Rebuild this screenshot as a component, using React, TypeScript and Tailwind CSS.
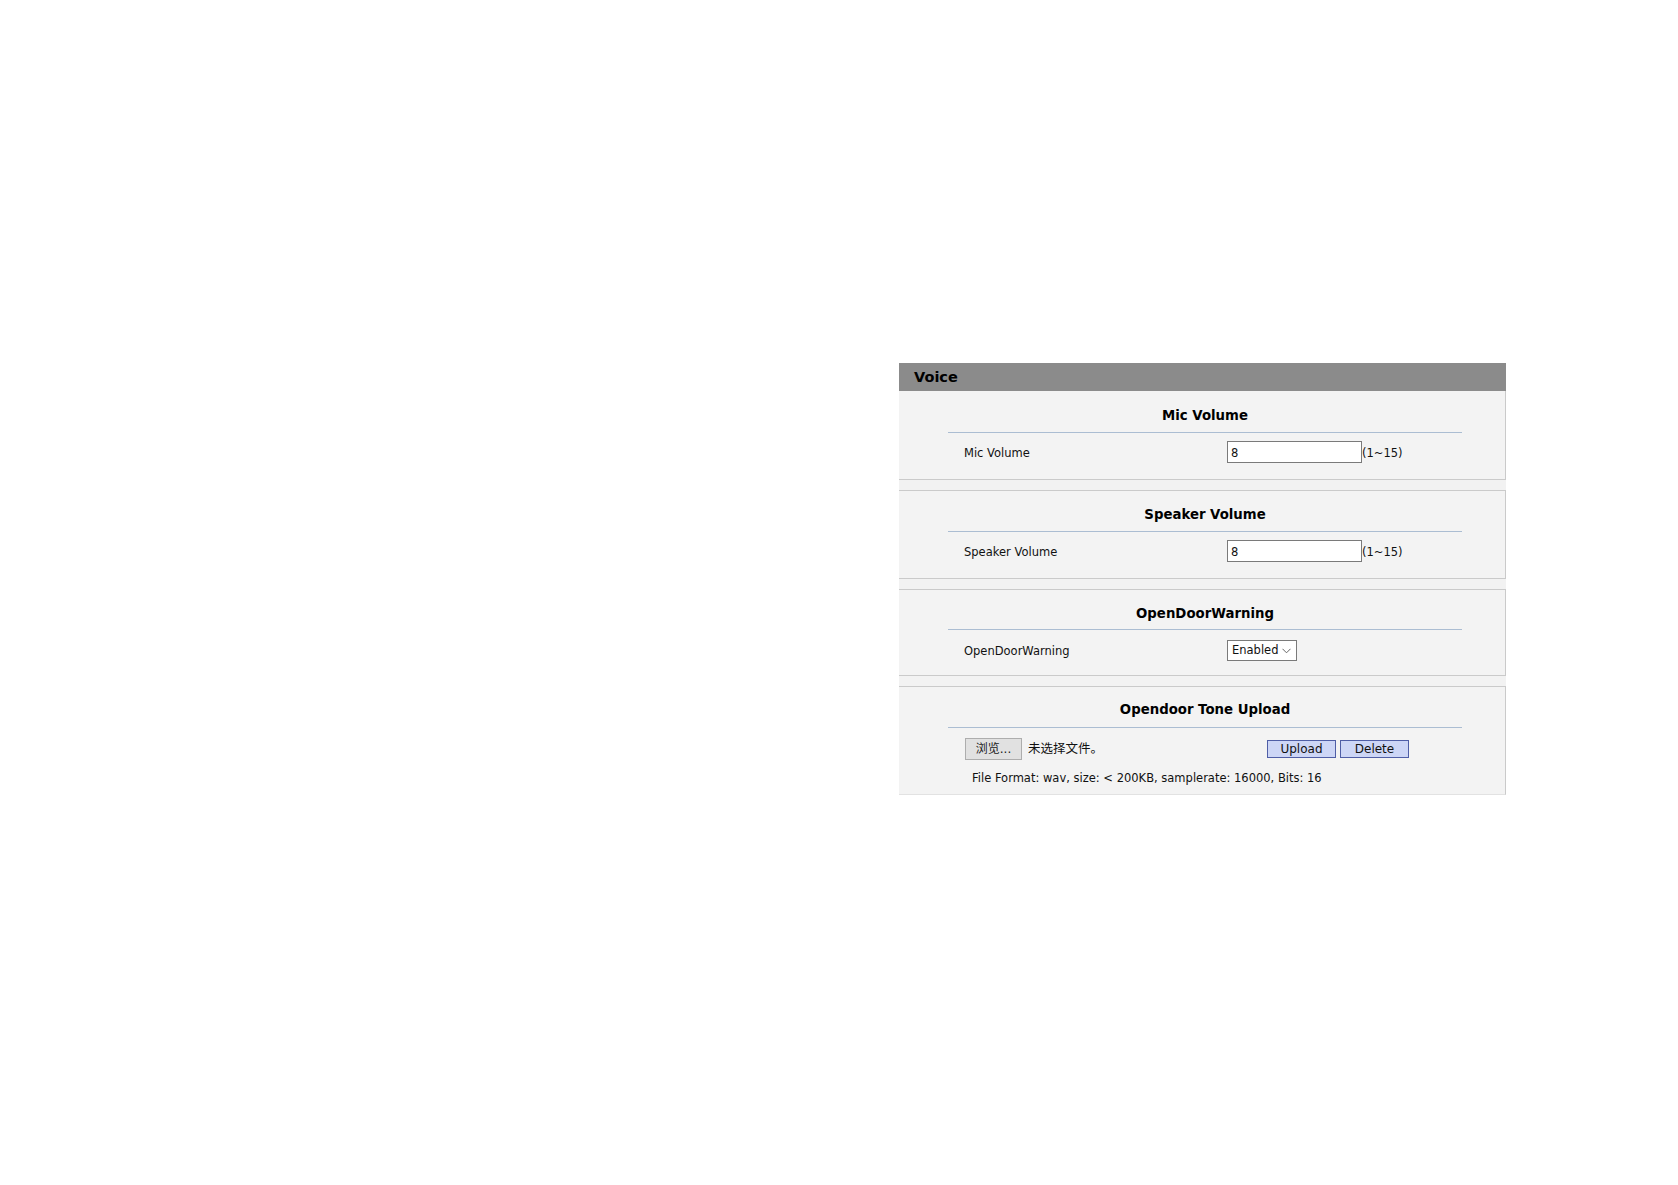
import React from 'react';

const font = { fontFamily: '"DejaVu Sans", Verdana, sans-serif' };
const cjk = { fontFamily: '"DejaVu Sans", "Noto Sans CJK SC", sans-serif' };

const SectionTitle: React.FC<{ title: string; gap: string }> = ({ title, gap }) => (
  <>
    <div className="h-[20px] leading-[20px] text-center text-[13.3px] font-bold text-black">{title}</div>
    <div className={`${gap} h-px bg-[#abbdd2]`} />
  </>
);

const NumberRow: React.FC<{ label: string; value: string }> = ({ label, value }) => (
  <div className="mt-[8px] flex h-[22px] items-center text-[11.5px] text-[#111]">
    <div className="w-[279px] pl-[16px] pt-[4px]">{label}</div>
    <div className="flex h-[22px] w-[135px] items-center border border-[#7a7a7a] bg-white pl-[3px] pt-[3px]">{value}</div>
    <span className="pt-[4px]">(1~15)</span>
  </div>
);

const App: React.FC = () => {
  return (
    <div className="min-h-[1185px] bg-white pl-[899px] pt-[363px]" style={font}>
      <div className="w-[607px] bg-[#f2f2f2]">
        <div className="flex h-[28px] items-center bg-[#8b8b8b] pl-[15px] pt-[2px] text-[14.5px] font-bold text-black">Voice</div>

        <div className="border-b border-r border-[#cacaca] bg-[#f3f3f3] pb-[16px] pt-[15px]">
          <div className="ml-[49px] w-[514px]">
            <SectionTitle title="Mic Volume" gap="mt-[6px]" />
            <NumberRow label="Mic Volume" value="8" />
          </div>
        </div>

        <div className="mt-[10px] border-y border-r border-[#cacaca] bg-[#f3f3f3] pb-[16px] pt-[14px]">
          <div className="ml-[49px] w-[514px]">
            <SectionTitle title="Speaker Volume" gap="mt-[6px]" />
            <NumberRow label="Speaker Volume" value="8" />
          </div>
        </div>

        <div className="mt-[10px] border-y border-r border-[#cacaca] bg-[#f3f3f3] pb-[14px] pt-[14px]">
          <div className="ml-[49px] w-[514px]">
            <SectionTitle title="OpenDoorWarning" gap="mt-[5px]" />
            <div className="mt-[10px] flex h-[21px] items-center text-[11.5px] text-[#111]">
              <div className="w-[279px] pl-[16px] pt-[3px]">OpenDoorWarning</div>
              <div className="flex h-[21px] w-[70px] items-center justify-between border border-[#7a7a7a] bg-white pl-[4px] pr-[5px] pt-[1px] text-[11.5px]">
                <span>Enabled</span>
                <svg width="9" height="6" viewBox="0 0 9 6" fill="none">
                  <path d="M0.5 0.8 L4.5 4.8 L8.5 0.8" stroke="#666" strokeWidth="1" />
                </svg>
              </div>
            </div>
          </div>
        </div>

        <div className="mt-[10px] border-t border-b border-r border-t-[#cacaca] border-b-[#e2e2e2] border-r-[#cacaca] bg-[#f3f3f3] pb-[8px] pt-[13px]">
          <div className="ml-[49px] w-[514px]">
            <SectionTitle title="Opendoor Tone Upload" gap="mt-[7px]" />
            <div className="mt-[10px] flex h-[22px] items-center">
              <div className="flex w-[319px] items-center pl-[17px]">
                <div
                  className="flex h-[22px] w-[57px] items-center justify-center border border-[#adadad] bg-[#e1e1e1] text-[12px] text-[#222]"
                  style={cjk}
                >
                  浏览...
                </div>
                <span className="ml-[6px] text-[12.5px] text-[#111]" style={cjk}>
                  未选择文件。
                </span>
              </div>
              <div className="flex h-[18px] w-[69px] items-center justify-center border border-[#4f5ea6] bg-[#cdd6f6] text-[12px] text-[#111]">
                Upload
              </div>
              <div className="ml-[4px] flex h-[18px] w-[69px] items-center justify-center border border-[#4f5ea6] bg-[#cdd6f6] text-[12px] text-[#111]">
                Delete
              </div>
            </div>
            <div className="mt-[10px] pl-[24px] text-[11.5px] leading-[16px] text-[#111]">
              File Format: wav, size: &lt; 200KB, samplerate: 16000, Bits: 16
            </div>
          </div>
        </div>
      </div>
    </div>
  );
};

export default App;
